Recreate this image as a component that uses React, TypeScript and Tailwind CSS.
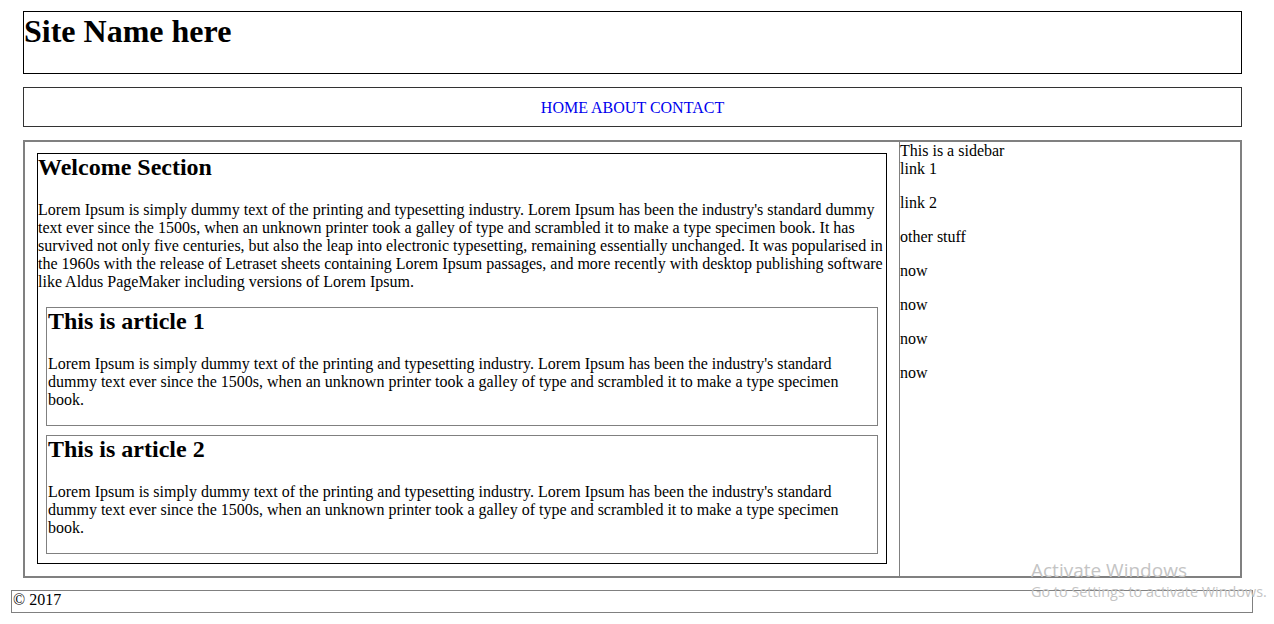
const lorem =
  "Lorem Ipsum is simply dummy text of the printing and typesetting industry. Lorem Ipsum has been the industry's standard dummy text ever since the 1500s, when an unknown printer took a galley of type and scrambled it to make a type specimen book.";

const loremLong =
  lorem +
  " It has survived not only five centuries, but also the leap into electronic typesetting, remaining essentially unchanged. It was popularised in the 1960s with the release of Letraset sheets containing Lorem Ipsum passages, and more recently with desktop publishing software like Aldus PageMaker including versions of Lorem Ipsum.";

function Article({ title }: { title: string }) {
  return (
    <article className="mx-2 mt-[9px] border border-[#808080] px-px first:mt-0">
      <h2 className="mb-5 text-2xl font-bold leading-[normal]">{title}</h2>
      <p className="mb-4">{lorem}</p>
    </article>
  );
}

const sideItems = ["link 1", "link 2", "other stuff", "now", "now", "now", "now"];

export default function App() {
  return (
    <div className="relative min-h-[624px] bg-white pt-[11px] font-['Liberation_Serif',serif] text-base leading-[normal] text-black">
      <div className="ml-[23px] w-[1219px]">
        {/* header */}
        <header className="h-[63px] border border-black pt-px">
          <h1 className="text-[32px] font-bold leading-[normal]">Site Name here</h1>
        </header>

        {/* nav */}
        <nav className="mt-[13px] border border-[#333] pt-[11px] pb-[9px] text-center text-[#0000ee]">
          <a href="#">HOME</a> <a href="#">ABOUT</a> <a href="#">CONTACT</a>
        </nav>

        {/* main */}
        <main className="mt-[13px] flex border-2 border-[#808080]">
          <section className="mx-3 mt-[11px] mb-3 w-[850px] shrink-0 border border-black pb-[9px]">
            <h2 className="mb-5 text-2xl font-bold leading-[normal]">Welcome Section</h2>
            <p className="mb-4">{loremLong}</p>
            <div className="flex flex-col">
              <Article title="This is article 1" />
              <Article title="This is article 2" />
            </div>
          </section>

          <aside className="flex-1 border-l border-[#808080]">
            <div>This is a sidebar</div>
            {sideItems.map((item, i) => (
              <p key={i} className="mb-4">
                {item}
              </p>
            ))}
          </aside>
        </main>
      </div>

      {/* footer */}
      <footer className="mx-[11px] mt-3 h-[23px] w-[1242px] border border-[#808080] pl-px">
        &copy; 2017
      </footer>

      {/* windows watermark */}
      <div className="pointer-events-none absolute left-[1031px] top-[557px] font-['Open_Sans',sans-serif] text-[#c4c4c4]">
        <div className="text-[19px] leading-[26px]">Activate Windows</div>
        <div className="text-[14.4px] leading-[18px]">Go to Settings to activate Windows.</div>
      </div>
    </div>
  );
}
